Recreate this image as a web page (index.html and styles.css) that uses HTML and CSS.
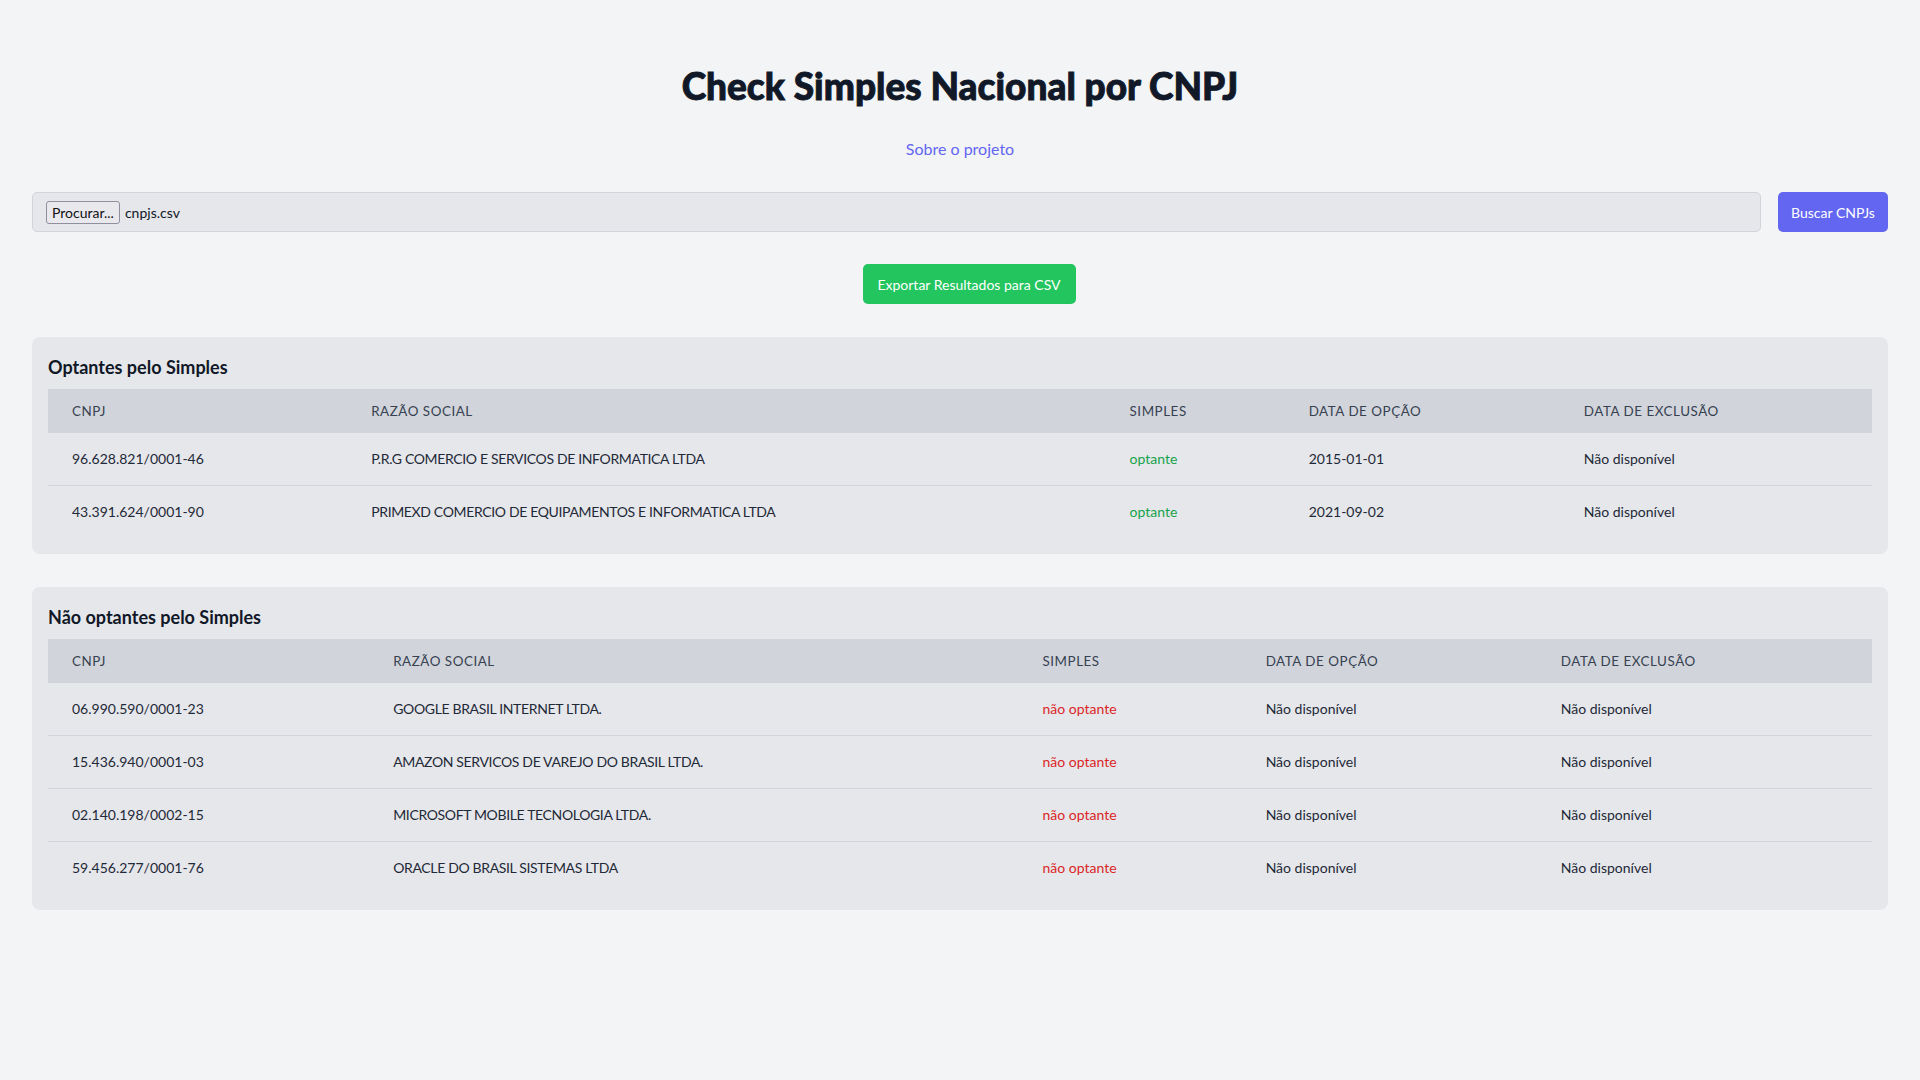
FILE: index.html
```html
<!DOCTYPE html>
<html lang="pt-BR">
<head>
<meta charset="utf-8">
<title>Check Simples Nacional por CNPJ</title>
<link rel="stylesheet" href="styles.css">
</head>
<body>
<main class="page">
  <h1 class="title">Check Simples Nacional por CNPJ</h1>
  <div class="about"><a href="#" class="about-link">Sobre o projeto</a></div>

  <div class="search-row">
    <label class="file-box">
      <span class="file-btn">Procurar...</span>
      <span class="file-name">cnpjs.csv</span>
    </label>
    <button class="btn btn-search">Buscar CNPJs</button>
  </div>

  <div class="export-row">
    <button class="btn btn-export">Exportar Resultados para CSV</button>
  </div>

  <section class="card">
    <h2 class="card-title">Optantes pelo Simples</h2>
    <table class="data t1">
      <colgroup><col class="c1"><col class="c2"><col class="c3"><col class="c4"><col class="c5"></colgroup>
      <thead>
        <tr><th>CNPJ</th><th>Razão Social</th><th>Simples</th><th>Data de Opção</th><th>Data de Exclusão</th></tr>
      </thead>
      <tbody>
        <tr><td>96.628.821/0001-46</td><td class="rs">P.R.G COMERCIO E SERVICOS DE INFORMATICA LTDA</td><td class="ok">optante</td><td>2015-01-01</td><td>Não disponível</td></tr>
        <tr><td>43.391.624/0001-90</td><td class="rs">PRIMEXD COMERCIO DE EQUIPAMENTOS E INFORMATICA LTDA</td><td class="ok">optante</td><td>2021-09-02</td><td>Não disponível</td></tr>
      </tbody>
    </table>
  </section>

  <section class="card">
    <h2 class="card-title">Não optantes pelo Simples</h2>
    <table class="data t2">
      <colgroup><col class="c1"><col class="c2"><col class="c3"><col class="c4"><col class="c5"></colgroup>
      <thead>
        <tr><th>CNPJ</th><th>Razão Social</th><th>Simples</th><th>Data de Opção</th><th>Data de Exclusão</th></tr>
      </thead>
      <tbody>
        <tr><td>06.990.590/0001-23</td><td class="rs">GOOGLE BRASIL INTERNET LTDA.</td><td class="no">não optante</td><td>Não disponível</td><td>Não disponível</td></tr>
        <tr><td>15.436.940/0001-03</td><td class="rs">AMAZON SERVICOS DE VAREJO DO BRASIL LTDA.</td><td class="no">não optante</td><td>Não disponível</td><td>Não disponível</td></tr>
        <tr><td>02.140.198/0002-15</td><td class="rs">MICROSOFT MOBILE TECNOLOGIA LTDA.</td><td class="no">não optante</td><td>Não disponível</td><td>Não disponível</td></tr>
        <tr><td>59.456.277/0001-76</td><td class="rs">ORACLE DO BRASIL SISTEMAS LTDA</td><td class="no">não optante</td><td>Não disponível</td><td>Não disponível</td></tr>
      </tbody>
    </table>
  </section>
</main>
</body>
</html>
```
FILE: styles.css
```css
* { box-sizing: border-box; }
html, body { margin: 0; padding: 0; }
body {
  background: #f3f4f6;
  font-family: "Lato", "Open Sans", sans-serif;
  color: #1f2937;
}
.page {
  padding: 32px;
}
.title {
  margin: 34px 0 0;
  text-align: center;
  font-size: 37px;
  line-height: 40px;
  font-weight: 900;
  color: #111827;
  -webkit-text-stroke: 0.9px #111827;
}
.about {
  margin-top: 31px;
  text-align: center;
  font-size: 16px;
  line-height: 24px;
}
.about-link {
  color: #6366f1;
  text-decoration: none;
}
.search-row {
  display: flex;
  gap: 17px;
  margin-top: 31px;
}
.file-box {
  flex: 1;
  display: flex;
  align-items: center;
  gap: 5px;
  height: 40px;
  padding: 0 13px;
  background: #e5e7eb;
  border: 1px solid #d1d5db;
  border-radius: 5px;
  font-size: 14px;
  color: #111827;
}
.file-btn {
  display: inline-flex;
  align-items: center;
  height: 23px;
  padding: 0 5px;
  border: 1px solid #8f8f9d;
  border-radius: 3px;
  background: #e9e9ed;
  font-size: 14px;
  color: #111;
}
.file-name { font-size: 14px; }
.btn {
  border: none;
  border-radius: 5px;
  color: #fff;
  font-family: inherit;
  font-size: 14px;
  height: 40px;
  cursor: pointer;
}
.btn-search {
  width: 110px;
  background: #6366f1;
}
.export-row {
  display: flex;
  justify-content: center;
  margin-top: 32px;
}
.btn-export {
  width: 213px;
  margin-left: 18px;
  background: #22c55e;
}
.card {
  margin-top: 33px;
  background: #e5e7eb;
  border-radius: 8px;
  padding: 16px;
}
.card-title {
  margin: 0 0 8px;
  font-size: 18px;
  line-height: 28px;
  font-weight: 700;
  color: #111827;
}
.data {
  width: 100%;
  border-collapse: collapse;
  table-layout: fixed;
  font-size: 14px;
}
.data thead tr { background: #d1d5db; }
.data th {
  text-align: left;
  font-weight: 400;
  font-size: 13.4px;
  text-transform: uppercase;
  letter-spacing: 0.04em;
  color: #374151;
  padding: 12px 24px;
  line-height: 20px;
}
.data td {
  padding: 16px 24px;
  line-height: 20px;
  color: #1f2937;
  white-space: nowrap;
}
.data td.rs { letter-spacing: -0.35px; }
.data tbody tr + tr { border-top: 1px solid #d1d5db; }
.data td.ok { color: #16a34a; }
.data td.no { color: #dc2626; }

.t1 .c1 { width: 299px; }
.t1 .c2 { width: 758px; }
.t1 .c3 { width: 179px; }
.t1 .c4 { width: 275px; }
.t1 .c5 { width: 312px; }

.t2 .c1 { width: 321px; }
.t2 .c2 { width: 649px; }
.t2 .c3 { width: 223px; }
.t2 .c4 { width: 295px; }
.t2 .c5 { width: 335px; }
```
